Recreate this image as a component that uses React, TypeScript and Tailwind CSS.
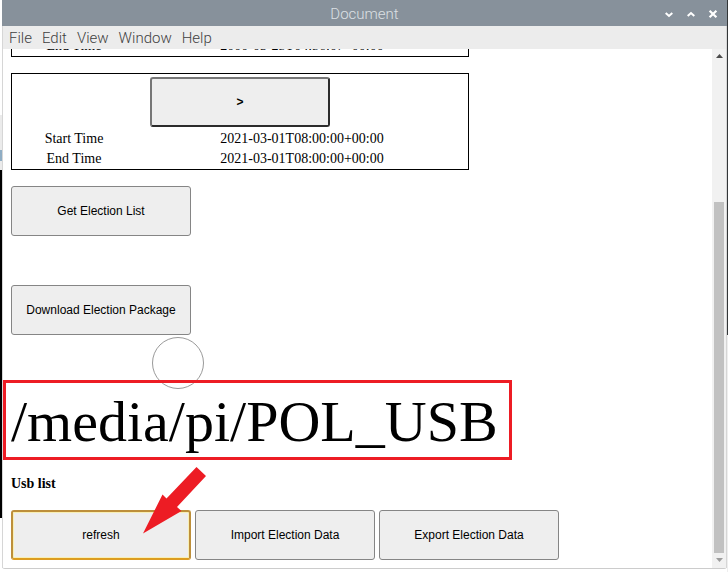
import React from "react";

const actionButton =
  "h-[50px] w-[180px] shrink-0 rounded-[3px] border border-[#858585] bg-[#eeeeee] font-['Liberation_Sans',Arial,sans-serif] text-[12px] leading-4 text-black";

function ElectionTable({ start, end }: { start?: string; end: string }) {
  return (
    <table className="w-full max-w-[458px] shrink-0 table-fixed border-separate border-spacing-0 border border-black text-center text-[14px] leading-5">
      <colgroup>
        <col className="w-[124px]" />
        <col />
      </colgroup>
      {start && (
        <thead>
          <tr>
            <th colSpan={2} className="px-0 pt-[3px] pb-[2px]">
              <button
                type="button"
                className="block mx-auto h-[50px] w-[180px] rounded-[3px] border-2 border-t-[#767676] border-r-[#2b2b2b] border-b-[#2b2b2b] border-l-[#767676] bg-[#eeeeee] font-['Liberation_Sans',Arial,sans-serif] text-[12px] font-bold leading-4"
              >
                &gt;
              </button>
            </th>
          </tr>
        </thead>
      )}
      <tbody>
        {start && (
          <tr>
            <th scope="row" className="p-0 font-normal">Start Time</th>
            <td className="p-0">{start}</td>
          </tr>
        )}
        <tr>
          <th scope="row" className="p-0 font-normal">End Time</th>
          <td className="p-0">{end}</td>
        </tr>
      </tbody>
    </table>
  );
}

function TitleBar() {
  return (
    <header className="grid h-[26px] shrink-0 grid-cols-[1fr_auto_1fr] items-center bg-[#87919b] pt-px font-[Roboto,sans-serif] text-white">
      <h1 className="col-start-2 text-[15px] font-light leading-[22px] text-[#dce0e4]">Document</h1>
      <div className="flex justify-end gap-2 pr-[7px]">
        <button type="button" aria-label="Minimize">
          <svg className="size-[14px]" viewBox="0 0 14 14" fill="none" stroke="currentColor" strokeWidth="2">
            <path d="M3.7 5.900 7 8.900l3.300-3" />
          </svg>
        </button>
        <button type="button" aria-label="Maximize">
          <svg className="size-[14px]" viewBox="0 0 14 14" fill="none" stroke="currentColor" strokeWidth="2">
            <path d="M3.700 9 7 6l3.300 3" />
          </svg>
        </button>
        <button type="button" aria-label="Close">
          <svg className="size-[14px]" viewBox="0 0 14 14" fill="none" stroke="currentColor" strokeWidth="2.200">
            <path d="M3.600 3.700l6.800 6.600M10.400 3.700l-6.800 6.600" />
          </svg>
        </button>
      </div>
    </header>
  );
}

function MenuBar() {
  return (
    <nav className="flex h-[23px] shrink-0 items-center gap-[10px] bg-[#ececec] pl-[6px] font-[Roboto,sans-serif] text-[15px] font-light leading-5 text-[#3f3f3f]">
      {["File", "Edit", "View", "Window", "Help"].map((item) => (
        <button key={item} type="button">{item}</button>
      ))}
    </nav>
  );
}

function ScrollBar() {
  return (
    <div className="flex w-[14px] shrink-0 flex-col items-center bg-[#f1f1f1]">
      <svg className="mt-[5px] h-[4px] w-[7px]" viewBox="0 0 7 4"><path d="M0 4 3.500 0 7 4z" fill="#4b4b4b" /></svg>
      <div className="mt-[144px] w-[10px] flex-1 bg-[#c1c1c1]" />
      <svg className="mt-[5px] mb-[6px] h-[4px] w-[7px]" viewBox="0 0 7 4"><path d="M0 0h7L3.500 4z" fill="#9c9c9c" /></svg>
    </div>
  );
}

export default function App() {
  return (
    <div className="flex h-screen overflow-hidden bg-white">
      <div className="flex w-[2px] shrink-0 flex-col">
        <div className="h-[115px]" />
        <div className="h-[35px] bg-[#ebebeb]" />
        <div className="h-[11px] bg-[#8fadc4]" />
        <div className="h-[9px] bg-[#ebebeb]" />
        <div className="h-[348px] bg-black" />
      </div>

      <div className="mb-[3px] flex min-w-0 flex-1 flex-col rounded-b-[3px] border-b border-b-[#cccccc]">
        <TitleBar />
        <div className="flex min-h-0 flex-1 flex-col border-x border-[#d6d6d6]">
          <MenuBar />
          <div className="flex min-h-0 flex-1">
            <main className="flex min-w-0 flex-1 flex-col justify-end overflow-hidden px-2 pb-2 font-['Liberation_Serif','Times_New_Roman',serif] text-black">
              <ElectionTable end="2000-03-25T04:56:07+00:00" />
              <div className="mt-4 flex shrink-0 flex-col">
                <ElectionTable start="2021-03-01T08:00:00+00:00" end="2021-03-01T08:00:00+00:00" />
              </div>
              <button type="button" className={actionButton + " mt-4"}>Get Election List</button>
              <button type="button" className={actionButton + " mt-[49px]"}>Download Election Package</button>
              <div className="mt-[2px] ml-[141px] size-[52px] shrink-0 rounded-full border border-[#9a9a9a]" />
              <p className="relative shrink-0 self-start text-[58px] leading-[66px]">
                /media/pi/POL_USB
                <span className="absolute -top-[9px] -right-[14px] -bottom-[5px] -left-2 border-3 border-[#ed1c24]" />
              </p>
              <section className="relative mt-[18px] shrink-0">
                <h2 className="text-[14px] font-bold leading-[22px]">Usb list</h2>
                <div className="mt-[15px] flex gap-1">
                  <button
                    type="button"
                    className="h-[50px] w-[180px] shrink-0 rounded-[3px] border-2 border-[#bd8f3b] border-b-[#dc9c20] bg-[#eeeeee] font-['Liberation_Sans',Arial,sans-serif] text-[12px] leading-4 inset-ring inset-ring-[#f8efb4]"
                  >
                    refresh
                  </button>
                  <button type="button" className={actionButton}>Import Election Data</button>
                  <button type="button" className={actionButton}>Export Election Data</button>
                </div>
                <svg className="absolute -top-[6px] left-[132px] h-[67px] w-[64px]" viewBox="0 0 64 67" aria-hidden="true">
                  <path d="M0 66.500 19.500 27.500 23.500 31.500 53.500 0 63 9 34 40 38.500 44z" fill="#ed1c24" />
                </svg>
              </section>
            </main>
            <ScrollBar />
          </div>
        </div>
      </div>

      <div className="flex w-px shrink-0 flex-col bg-[#eeeeee]">
        <div className="h-[335px] bg-[#333638]" />
      </div>
    </div>
  );
}
